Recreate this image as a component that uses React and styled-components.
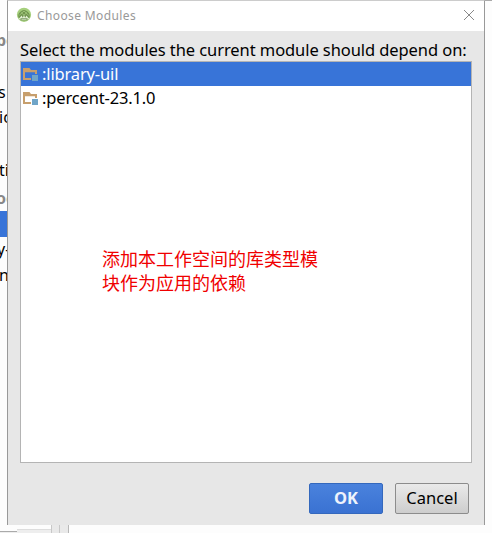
import React from 'react';
import styled, { createGlobalStyle } from 'styled-components';

const GlobalStyle = createGlobalStyle`
  * { box-sizing: border-box; }
  body { margin: 0; overflow: hidden; background: #fff; }
`;

const Screen = styled.div`
  width: 492px;
  height: 533px;
  display: grid;
  grid-template-columns: 7px 478px 7px;
  grid-template-rows: 525px 8px;
  overflow: hidden;
  background: #fdfdfd;
  color: #000;
  font-family: 'Noto Sans', 'Noto Sans CJK SC', sans-serif;
`;

const Backdrop = styled.div`
  display: flex;
  flex-direction: column;
  overflow: hidden;
  padding-top: 28px;
  background: #fdfdfd;
`;

const Fragment = styled.div`
  flex: none;
  height: ${(p) => p.$height}px;
  line-height: 25px;
  font-size: 16px;
  white-space: nowrap;
  font-weight: ${(p) => (p.$heading ? 700 : 400)};
  color: ${(p) => (p.$heading ? '#888' : '#000')};
  background: ${(p) => (p.$selected ? '#3874d8' : 'transparent')};
  text-indent: ${(p) => p.$indent || 0}px;
`;

const RightBackdrop = styled.div`
  border-top: 1px solid #aaa;
  background: #fdfdfd;
`;

const Dialog = styled.section`
  display: flex;
  flex-direction: column;
  border: 1px solid #999;
  border-top-color: #ccc;
  border-bottom: 0;
  background: #e7e7e7;
`;

const TitleBar = styled.header`
  height: 30px;
  display: flex;
  align-items: center;
  padding: 0 9px 2px 8px;
  background: #fff;
`;

const Title = styled.h1`
  flex: 1;
  margin: 2px 0 0 5px;
  font-size: 12px;
  line-height: 26px;
  font-weight: 400;
  letter-spacing: 0.38px;
  color: #999;
`;

const Content = styled.div`
  flex: 1;
  display: flex;
  flex-direction: column;
  padding: 7px 12px 11px;
`;

const Prompt = styled.label`
  height: 23px;
  line-height: 24px;
  font-size: 16.5px;
  letter-spacing: ${(p) => p.$spacing}px;
  white-space: nowrap;
`;

const List = styled.div`
  height: 402px;
  border: 1px solid #b4b4b4;
  background: #fff;
`;

const Row = styled.div`
  height: 24px;
  display: flex;
  align-items: center;
  gap: 3px;
  padding-left: 2px;
  font-size: 16.5px;
  line-height: 24px;
  letter-spacing: ${(p) => p.$spacing}px;
  color: ${(p) => (p.$selected ? '#fff' : '#000')};
  background: ${(p) => (p.$selected ? '#3874d8' : 'transparent')};
`;

const Note = styled.p`
  width: 220px;
  margin: 136px 0 0 81px;
  font-family: 'Noto Sans CJK SC', sans-serif;
  font-size: 18px;
  line-height: 24px;
  font-weight: 400;
  color: #f00000;
  white-space: nowrap;
`;

const Actions = styled.footer`
  display: flex;
  justify-content: flex-end;
  gap: 12px;
  padding: 20px 3px 0 0;
`;

const Button = styled.button`
  width: 74px;
  height: 31px;
  padding: 0 0 2px;
  border: 1px solid ${(p) => (p.$primary ? '#3468bd' : '#8c8c8c')};
  border-radius: 2px;
  font-family: inherit;
  font-size: 16.5px;
  line-height: 27px;
  font-weight: ${(p) => (p.$primary ? 700 : 400)};
  color: ${(p) => (p.$primary ? '#eef3fc' : '#000')};
  background: ${(p) =>
    p.$primary
      ? 'linear-gradient(#4a82dd, #3a72d2)'
      : 'linear-gradient(#eaeaea, #cdcdcd)'};
`;

const BottomBackdrop = styled.div`
  grid-column: 1 / -1;
  display: flex;
  background: #fdfdfd;
`;

const BottomTab = styled.div`
  width: ${(p) => p.$width}px;
  margin-top: ${(p) => p.$top}px;
  border-top: 1px solid ${(p) => p.$line};
  background: #eee;
`;

const Splitter = styled.div`
  width: ${(p) => p.$width}px;
  border-left: 1px solid #c8c8c8;
  border-right: ${(p) => (p.$last ? '1px solid #b8b8b8' : '0')};
  background: #e9e9e9;
`;

const StudioIcon = () => (
  <svg width="16" height="16" viewBox="0 0 16 16">
    <circle cx="8" cy="7.8" r="7.1" fill="#a5cf7c" />
    <path d="M3.2 11.8a5.6 5.6 0 1 1 9.6 0" fill="#71954f" />
    <path d="M3.2 8.4 8 4l4.8 4.4M5.1 5.5 8 8.2l2.9-2.7" fill="none" stroke="#a9cf83" strokeWidth=".8" />
    <path d="M2.4 12.2 5.6 8.5l1.2 2.2L8 8l1.2 2.7 1.2-2.2 3.2 3.7Z" fill="#e3f0d5" />
    <path d="M4.5 11.2h7v2.2h-7Z" fill="#7d9b61" />
    <path d="M5.5 12.4h5" stroke="#edf5e5" strokeWidth=".6" />
  </svg>
);

const ModuleIcon = () => (
  <svg width="16" height="16" viewBox="0 0 16 16">
    <path
      d="M0 2h6.5l1.5 2h6v4h-2V6.2H2V12h6v2H0Z"
      fill="#c79f6d"
    />
    <path d="M9 9h6v6H9Z" fill="#70a5c8" />
  </svg>
);

const CloseIcon = () => (
  <svg width="12" height="12" viewBox="0 0 12 12">
    <path d="m1 1 10 10M11 1 1 11" stroke="#888" fill="none" />
  </svg>
);

const fragments = [
  { text: 'pe', height: 52, heading: true, indent: -4 },
  { text: 's', height: 25, indent: -2 },
  { text: 'ic', height: 53, indent: -1 },
  { text: 'ti', height: 28, indent: -1 },
  { text: 'oe', height: 25, heading: true, indent: -4 },
  { text: '', height: 26, selected: true },
  { text: 'y-', height: 26, indent: -3 },
  { text: 'n', height: 25, indent: -1 },
];

const modules = [
  { name: ':library-uil', selected: true, spacing: -0.15 },
  { name: ':percent-23.1.0', selected: false, spacing: -0.15 },
];

export default function App() {
  return (
    <>
      <GlobalStyle />
      <Screen>
        <Backdrop>
          {fragments.map((f, i) => (
            <Fragment key={i} $height={f.height} $heading={f.heading} $selected={f.selected} $indent={f.indent}>
              {f.text}
            </Fragment>
          ))}
        </Backdrop>
        <Dialog>
          <TitleBar>
            <StudioIcon />
            <Title>Choose Modules</Title>
            <CloseIcon />
          </TitleBar>
          <Content>
            <Prompt $spacing={-0.08}>Select the modules the current module should depend on:</Prompt>
            <List>
              {modules.map((m) => (
                <Row key={m.name} $selected={m.selected} $spacing={m.spacing}>
                  <ModuleIcon />
                  {m.name}
                </Row>
              ))}
              <Note>添加本工作空间的库类型模<br />块作为应用的依赖</Note>
            </List>
            <Actions>
              <Button $primary>OK</Button>
              <Button>Cancel</Button>
            </Actions>
          </Content>
        </Dialog>
        <RightBackdrop />
        <BottomBackdrop>
          <BottomTab $width={17} $top={6} $line="#aaa" />
          <BottomTab $width={34} $top={4} $line="#ddd" />
          <Splitter $width={8} />
          <Splitter $width={10} $last />
        </BottomBackdrop>
      </Screen>
    </>
  );
}
